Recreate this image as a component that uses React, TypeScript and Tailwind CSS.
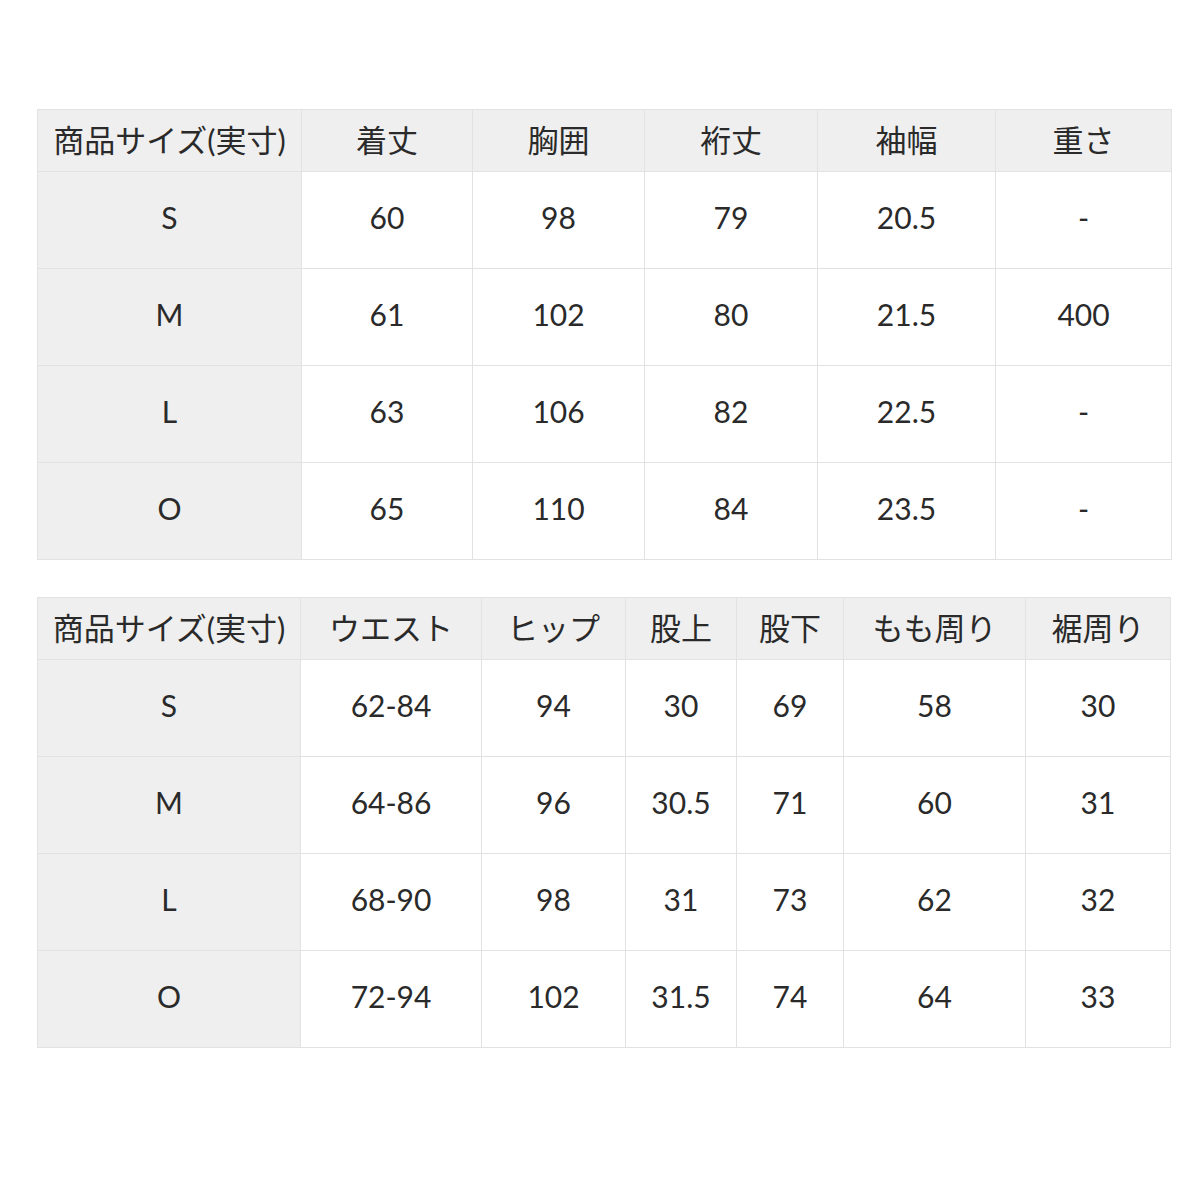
const top = {
  widths: [264, 171, 172, 173, 178, 176],
  head: ['商品サイズ(実寸)', '着丈', '胸囲', '裄丈', '袖幅', '重さ'],
  rows: [
    ['S', '60', '98', '79', '20.5', '-'],
    ['M', '61', '102', '80', '21.5', '400'],
    ['L', '63', '106', '82', '22.5', '-'],
    ['O', '65', '110', '84', '23.5', '-'],
  ],
};

const bottom = {
  widths: [263, 181, 144, 111, 107, 182, 145],
  head: ['商品サイズ(実寸)', 'ウエスト', 'ヒップ', '股上', '股下', 'もも周り', '裾周り'],
  rows: [
    ['S', '62-84', '94', '30', '69', '58', '30'],
    ['M', '64-86', '96', '30.5', '71', '60', '31'],
    ['L', '68-90', '98', '31', '73', '62', '32'],
    ['O', '72-94', '102', '31.5', '74', '64', '33'],
  ],
};

function SizeTable({ widths, head, rows }: { widths: number[]; head: string[]; rows: string[][] }) {
  return (
    <table className="table-fixed border-collapse border border-[#dcdcdc] text-[#2a2a2a]">
      <colgroup>
        {widths.map((w, i) => (
          <col key={i} style={{ width: w }} />
        ))}
      </colgroup>
      <thead>
        <tr className="h-[62px] bg-[#efefef]">
          {head.map((h, i) => (
            <th key={i} className="border border-[#e2e2e2] p-0 text-[31px] font-normal whitespace-nowrap">
              {h}
            </th>
          ))}
        </tr>
      </thead>
      <tbody>
        {rows.map((r, ri) => (
          <tr key={ri} className="h-[97px]">
            {r.map((c, ci) => (
              <td
                key={ci}
                className={`border border-[#e2e2e2] p-0 pb-[5px] text-center text-[30px] ${ci === 0 ? 'bg-[#efefef]' : 'bg-white'}`}
              >
                {c}
              </td>
            ))}
          </tr>
        ))}
      </tbody>
    </table>
  );
}

export default function App() {
  return (
    <div
      className="w-[1200px] h-[1200px] bg-white pt-[109px] pl-[37px]"
      style={{ fontFamily: 'Lato, "Noto Sans CJK JP", sans-serif' }}
    >
      <SizeTable {...top} />
      <div className="h-[37px]" />
      <SizeTable {...bottom} />
    </div>
  );
}
